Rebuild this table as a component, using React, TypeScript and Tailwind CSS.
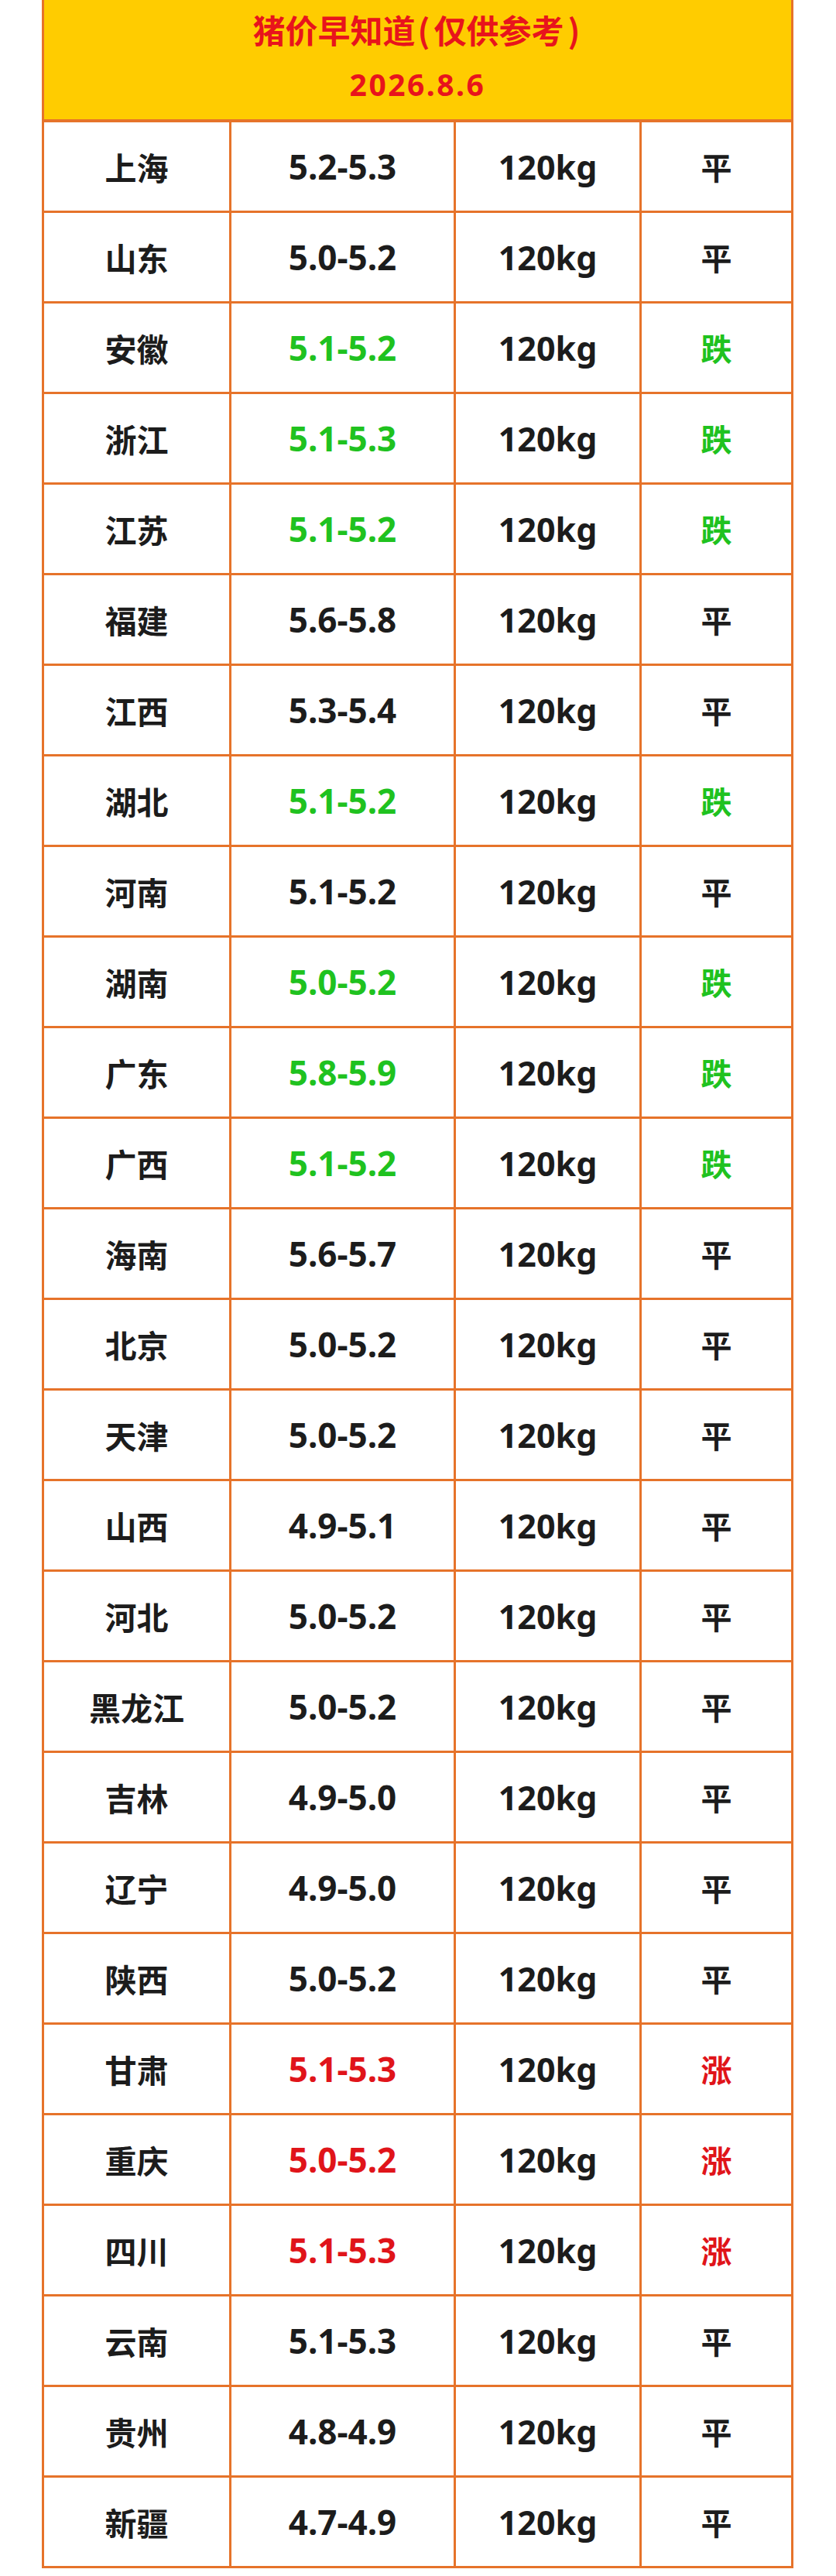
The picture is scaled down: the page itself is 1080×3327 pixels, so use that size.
import React from "react";

type Row = { name: string; price: string; trend: "平" | "跌" | "涨" };

const rows: Row[] = [
  { name: "上海", price: "5.2-5.3", trend: "平" },
  { name: "山东", price: "5.0-5.2", trend: "平" },
  { name: "安徽", price: "5.1-5.2", trend: "跌" },
  { name: "浙江", price: "5.1-5.3", trend: "跌" },
  { name: "江苏", price: "5.1-5.2", trend: "跌" },
  { name: "福建", price: "5.6-5.8", trend: "平" },
  { name: "江西", price: "5.3-5.4", trend: "平" },
  { name: "湖北", price: "5.1-5.2", trend: "跌" },
  { name: "河南", price: "5.1-5.2", trend: "平" },
  { name: "湖南", price: "5.0-5.2", trend: "跌" },
  { name: "广东", price: "5.8-5.9", trend: "跌" },
  { name: "广西", price: "5.1-5.2", trend: "跌" },
  { name: "海南", price: "5.6-5.7", trend: "平" },
  { name: "北京", price: "5.0-5.2", trend: "平" },
  { name: "天津", price: "5.0-5.2", trend: "平" },
  { name: "山西", price: "4.9-5.1", trend: "平" },
  { name: "河北", price: "5.0-5.2", trend: "平" },
  { name: "黑龙江", price: "5.0-5.2", trend: "平" },
  { name: "吉林", price: "4.9-5.0", trend: "平" },
  { name: "辽宁", price: "4.9-5.0", trend: "平" },
  { name: "陕西", price: "5.0-5.2", trend: "平" },
  { name: "甘肃", price: "5.1-5.3", trend: "涨" },
  { name: "重庆", price: "5.0-5.2", trend: "涨" },
  { name: "四川", price: "5.1-5.3", trend: "涨" },
  { name: "云南", price: "5.1-5.3", trend: "平" },
  { name: "贵州", price: "4.8-4.9", trend: "平" },
  { name: "新疆", price: "4.7-4.9", trend: "平" },
];

function colorFor(t: Row["trend"]) {
  if (t === "跌") return "text-[#1fc21f]";
  if (t === "涨") return "text-[#e0141a]";
  return "text-[#1c1c1c]";
}

export default function App() {
  return (
    <div className="w-[1080px] min-h-[3327px] bg-white">
      <div className="ml-[54px] w-[971px] border-x-[3px] border-[#e6732a]">
        <div className="h-[158px] bg-[#ffcc00] border-b-4 border-[#e6732a] flex flex-col items-center pt-[16px]">
          <div className="h-[44px] leading-[44px] text-[42px] font-bold text-[#e8141c] font-['Noto_Sans_CJK_SC',sans-serif] whitespace-nowrap">
            猪价早知道<span className="pl-[3px] pr-[5px]">(</span>仅供参考<span className="pl-[5px] pr-[3px]">)</span>
          </div>
          <div className="mt-[29px] h-[40px] leading-[40px] text-[39px] tracking-[2.5px] font-bold text-[#e8141c] font-['Noto_Sans','Noto_Sans_CJK_SC',sans-serif]">
            2026.8.6
          </div>
        </div>
        {rows.map((r) => (
          <div key={r.name} className="flex h-[117px] border-b-[3px] border-[#e6732a]">
            <div className="w-[242px] border-r-[3px] border-[#e6732a] flex items-center justify-center text-[41px] leading-none font-bold text-[#1c1c1c] font-['Noto_Sans_CJK_SC',sans-serif]">
              {r.name}
            </div>
            <div
              className={`w-[290px] border-r-[3px] border-[#e6732a] flex items-center justify-center text-[44px] leading-none font-bold font-['Noto_Sans','Noto_Sans_CJK_SC',sans-serif] ${colorFor(r.trend)}`}
            >
              {r.price}
            </div>
            <div className="w-[240px] border-r-[3px] border-[#e6732a] flex items-center justify-center text-[43px] leading-none font-bold text-[#1c1c1c] font-['Noto_Sans','Noto_Sans_CJK_SC',sans-serif]">
              120kg
            </div>
            <div
              className={`w-[193px] flex items-center justify-center text-[40px] leading-none font-bold font-['Noto_Sans_CJK_SC',sans-serif] ${colorFor(r.trend)}`}
            >
              {r.trend}
            </div>
          </div>
        ))}
      </div>
    </div>
  );
}
